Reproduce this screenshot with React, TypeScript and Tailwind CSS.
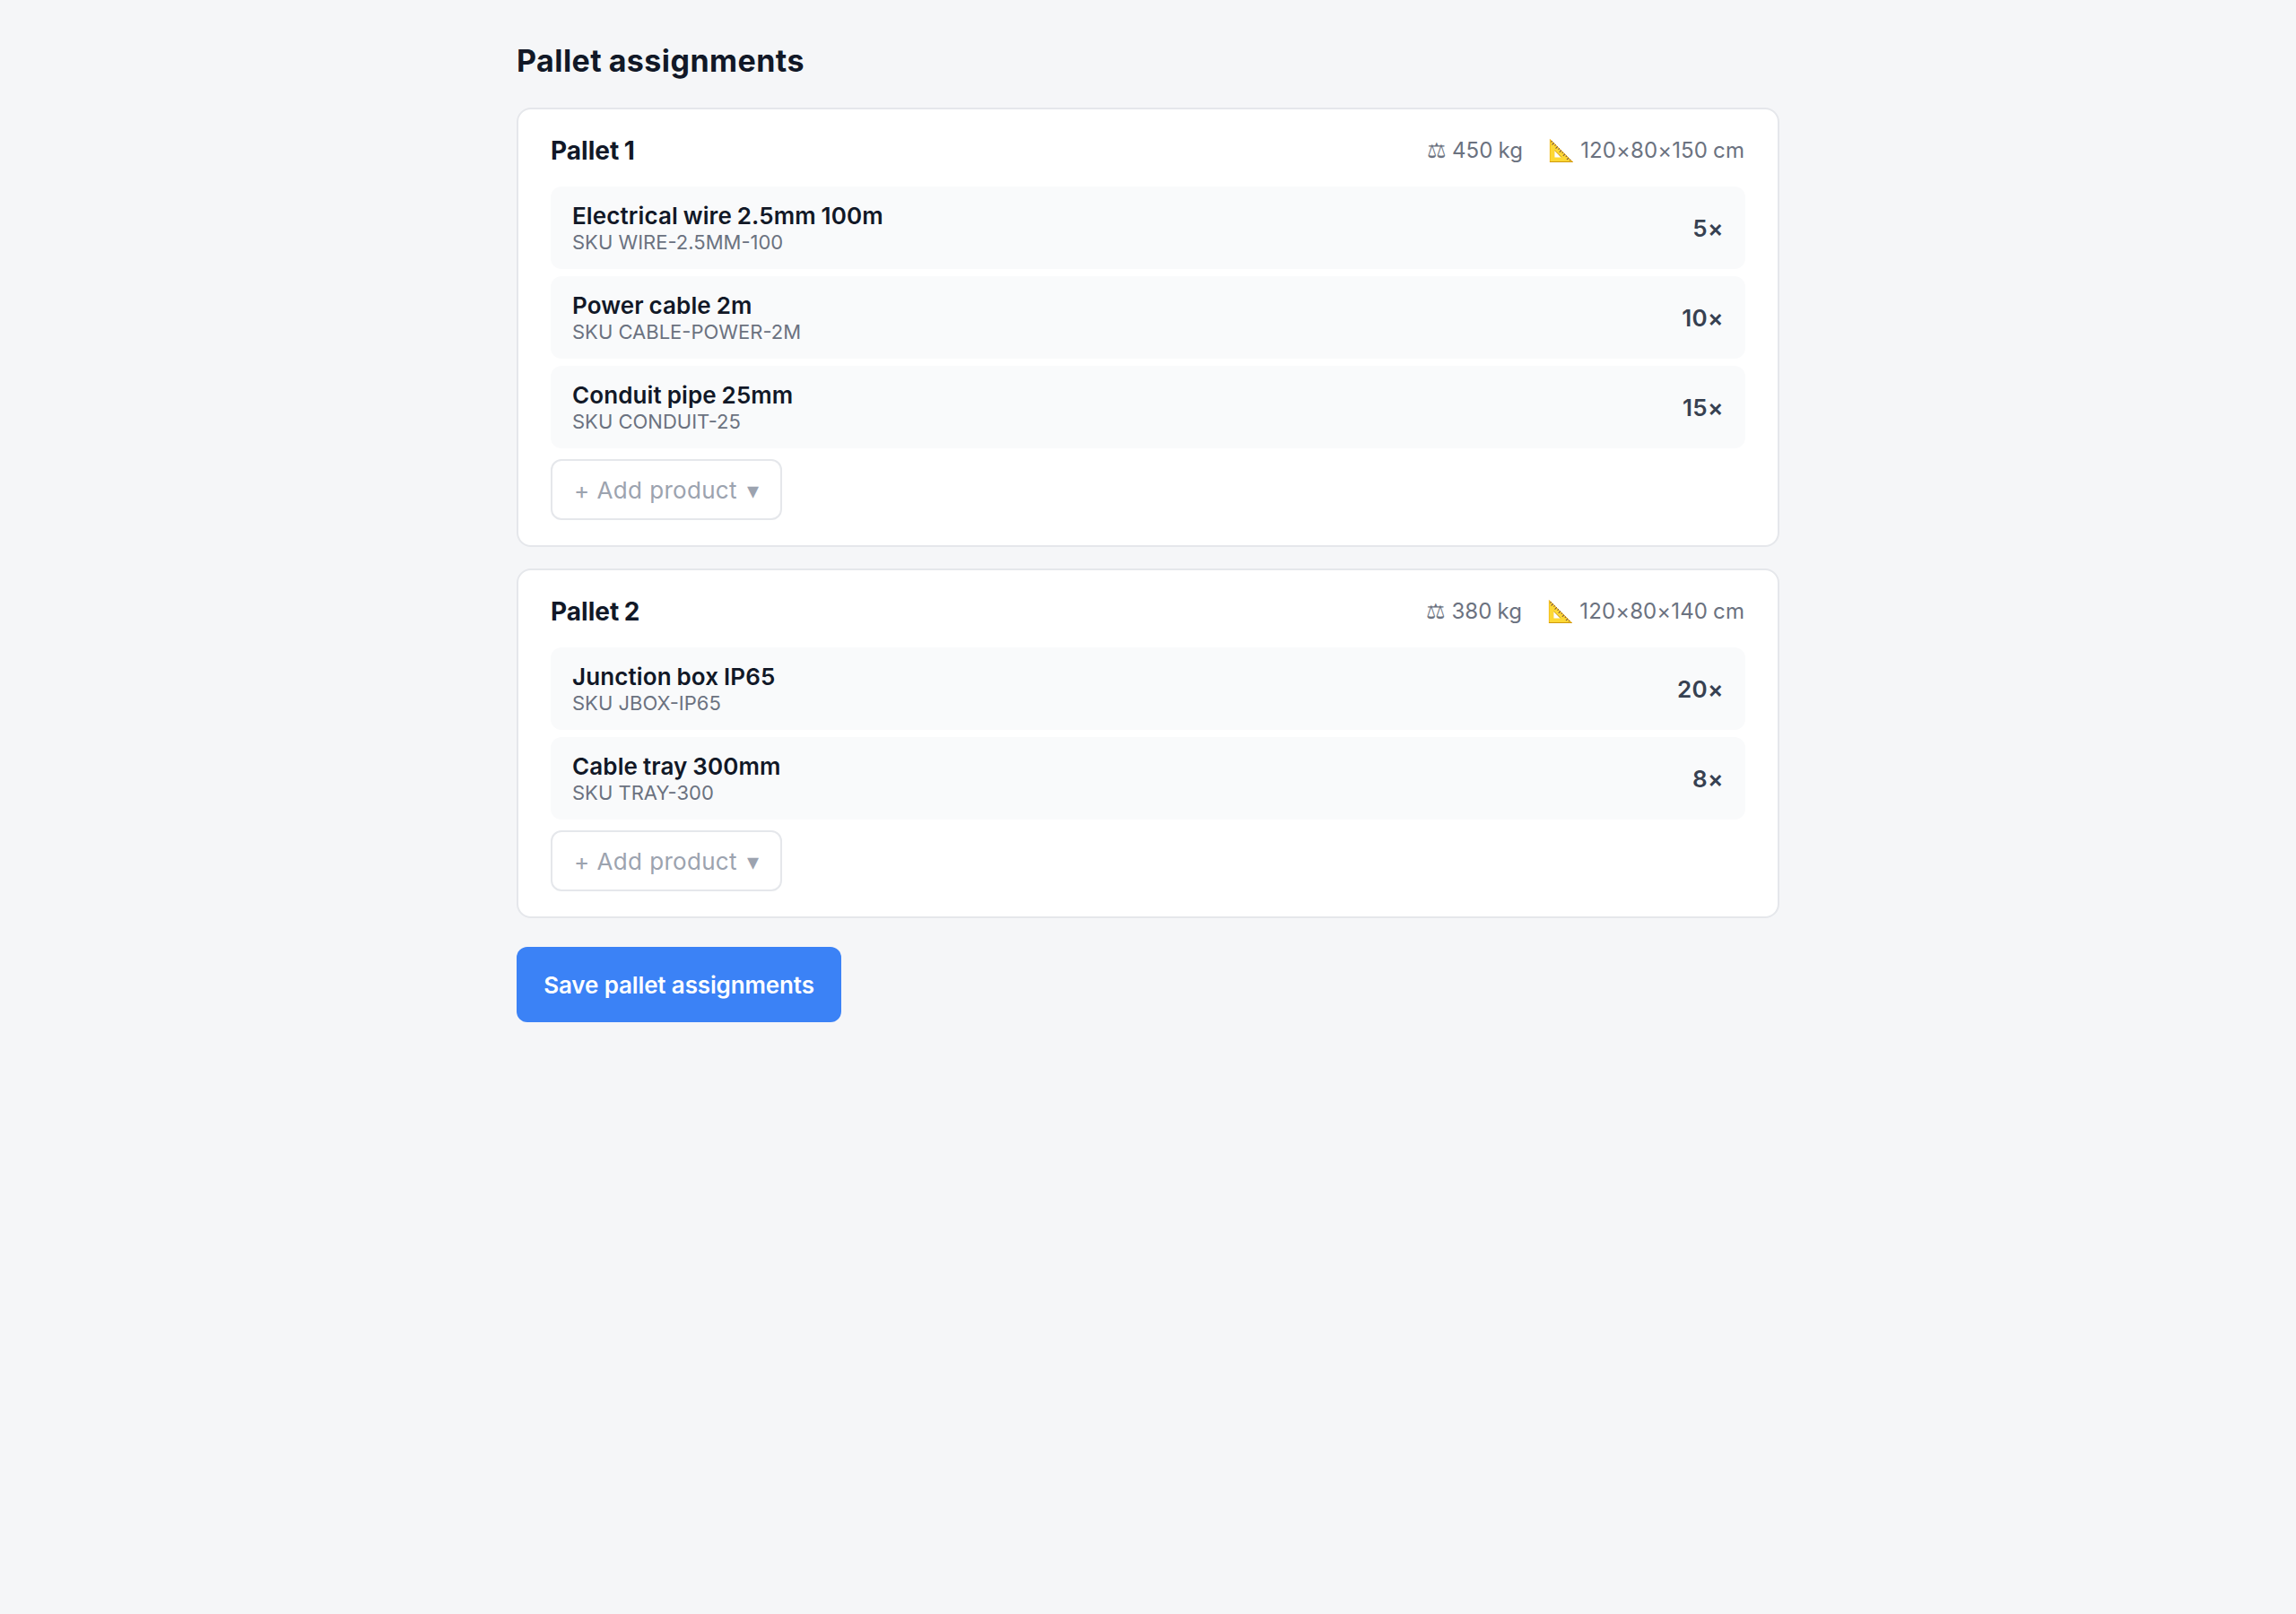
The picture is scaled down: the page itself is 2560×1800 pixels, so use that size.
interface Product {
  sku: string;
  name: string;
  quantity: number;
}

interface Pallet {
  id: number;
  weight: number;
  dimensions: string;
  products: Product[];
}

const pallets: Pallet[] = [
  {
    id: 1,
    weight: 450,
    dimensions: "120×80×150",
    products: [
      { sku: "WIRE-2.5MM-100", name: "Electrical wire 2.5mm 100m", quantity: 5 },
      { sku: "CABLE-POWER-2M", name: "Power cable 2m", quantity: 10 },
      { sku: "CONDUIT-25", name: "Conduit pipe 25mm", quantity: 15 },
    ],
  },
  {
    id: 2,
    weight: 380,
    dimensions: "120×80×140",
    products: [
      { sku: "JBOX-IP65", name: "Junction box IP65", quantity: 20 },
      { sku: "TRAY-300", name: "Cable tray 300mm", quantity: 8 },
    ],
  },
];

const ProductRow = ({ product }: { product: Product }) => (
  <div className="flex h-[92px] items-center justify-between rounded-xl bg-[#f9fafb] px-6">
    <div>
      <div className="text-[26px] leading-[32px] font-semibold tracking-[0.11px] [word-spacing:-0.8px] text-[#111827]">
        {product.name}
      </div>
      <div className="text-[22px] leading-[27px] text-[#6b7280]">SKU {product.sku}</div>
    </div>
    <div className="pt-px text-[26px] leading-[32px] font-semibold tracking-[0.4px] text-[#374151]">
      {product.quantity}×
    </div>
  </div>
);

const PalletCard = ({ pallet }: { pallet: Pallet }) => (
  <div className="rounded-2xl border-2 border-[#e5e7eb] bg-white px-9 py-7">
    <div className="mb-6 flex h-[34px] items-center justify-between">
      <h3 className="pt-px text-[28px] leading-[34px] font-bold [word-spacing:-1px] text-[#111827]">
        Pallet {pallet.id}
      </h3>
      <div className="flex gap-7 pt-px pr-px text-[24px] leading-[30px] tracking-[0.1px] [word-spacing:-0.8px] text-[#6b7280]">
        <span>⚖ {pallet.weight} kg</span>
        <span>📐 {pallet.dimensions} cm</span>
      </div>
    </div>
    <div className="flex flex-col gap-2">
      {pallet.products.map((product) => (
        <ProductRow key={product.sku} product={product} />
      ))}
    </div>
    <button className="mt-3 flex h-[68px] w-[258px] items-center gap-[11px] rounded-xl border-2 border-[#e5e7eb] bg-white px-6 text-[26px] tracking-[0.3px] [word-spacing:0.4px] whitespace-nowrap text-[#9ca3af]">
      <span>+ Add product</span>
      <span>▾</span>
    </button>
  </div>
);

const App = () => {
  return (
    <div className="min-h-screen bg-[#f5f6f8] pt-12 font-['Inter',sans-serif]">
      <div className="mx-auto w-[1408px]">
        <h2 className="mb-8 text-[34px] leading-[40px] font-bold tracking-[0.45px] [word-spacing:-1px] text-[#111827]">
          Pallet assignments
        </h2>
        <div className="flex flex-col gap-6">
          {pallets.map((pallet) => (
            <PalletCard key={pallet.id} pallet={pallet} />
          ))}
        </div>
        <button className="mt-8 flex h-[84px] w-[362px] items-center justify-center rounded-xl bg-[#3b82f6] text-[26px] font-semibold tracking-[-0.13px] whitespace-nowrap text-white">
          Save pallet assignments
        </button>
      </div>
    </div>
  );
};

export default App;
